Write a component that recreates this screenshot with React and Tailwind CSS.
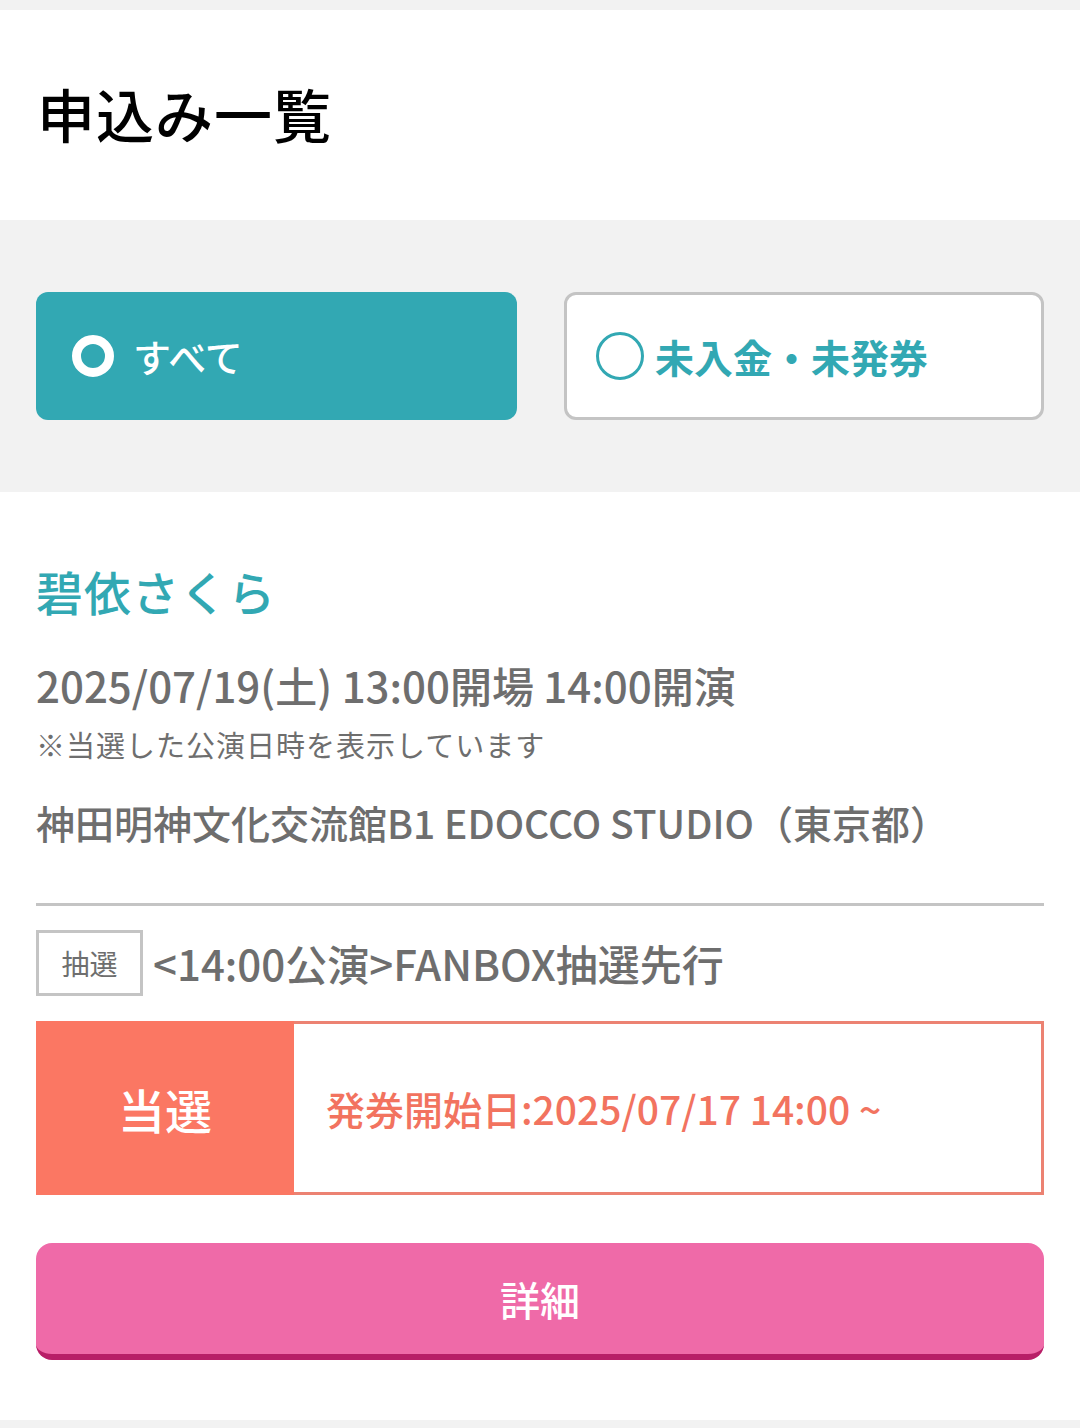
import React, { useState } from "react";

const font = { fontFamily: '"Noto Sans CJK JP", "Noto Sans", sans-serif' };

const App = () => {
  const [filter, setFilter] = useState("all");

  return (
    <div className="min-h-[1428px] bg-[#f2f2f2] pt-[10px]" style={font}>
      <div className="bg-white h-[210px] flex items-center px-[37px]">
        <h1 className="text-[58px] leading-none text-black font-medium tracking-[1px] pb-[4px]">
          申込み一覧
        </h1>
      </div>

      <div className="h-[272px] flex items-center gap-[47px] px-9">
        <button
          onClick={() => setFilter("all")}
          className={
            filter === "all"
              ? "w-[481px] h-[128px] rounded-[12px] bg-[#32a8b3] flex items-center px-[36px] gap-[19px]"
              : "w-[481px] h-[128px] rounded-[12px] bg-white border-[3px] border-[#c4c4c4] flex items-center px-[30px] gap-[12px]"
          }
        >
          <span className="w-[42px] h-[42px] rounded-full border-[9px] border-white" />
          <span className="text-[38px] leading-none text-white font-medium">すべて</span>
        </button>
        <button
          onClick={() => setFilter("unpaid")}
          className="flex-1 h-[128px] rounded-[12px] bg-white border-[3px] border-[#c4c4c4] flex items-center px-[29px] gap-[11px]"
        >
          <span className="w-[48px] h-[48px] rounded-full border-[3px] border-[#32a8b3]" />
          <span className="text-[39px] leading-none text-[#32a8b3] font-bold">未入金・未発券</span>
        </button>
      </div>

      <div className="bg-white h-[928px] px-9 pt-[75px]">
        <h2 className="text-[47px] leading-none text-[#32a8b3] font-medium tracking-[1px]">碧依さくら</h2>

        <p className="mt-[50px] text-[42px] leading-none text-[#6e6e6e] font-medium">
          2025/07/19(土) 13:00開場 14:00開演
        </p>
        <p className="mt-[24px] text-[29px] leading-none text-[#6e6e6e] tracking-[1px]">
          ※当選した公演日時を表示しています
        </p>
        <p className="mt-[44px] text-[39px] leading-none text-[#6e6e6e] font-medium">
          神田明神文化交流館B1 EDOCCO STUDIO（東京都）
        </p>

        <div className="mt-[61px] border-t-[3px] border-[#c4c4c4]" />

        <div className="mt-[24px] flex items-center gap-[10px]">
          <span className="w-[107px] h-[66px] border-[3px] border-[#c4c4c4] flex items-center justify-center text-[28px] text-[#6e6e6e]">
            抽選
          </span>
          <span className="text-[42px] leading-none text-[#6e6e6e] font-medium">
            &lt;14:00公演&gt;FANBOX抽選先行
          </span>
        </div>

        <div className="mt-[25px] h-[174px] flex border-[3px] border-[#ec8272]">
          <div className="w-[258px] bg-[#fb7763] flex items-center justify-center -m-[3px] mr-0">
            <span className="text-[47px] leading-none text-white font-medium">当選</span>
          </div>
          <div className="flex-1 flex items-center pl-[32px]">
            <span className="text-[39px] leading-none text-[#f2735f] font-medium">
              発券開始日:2025/07/17 14:00 ~
            </span>
          </div>
        </div>

        <button className="mt-[48px] w-full h-[117px] rounded-[16px] bg-[#ef6aa8] border-b-[6px] border-[#b81e67] flex items-center justify-center">
          <span className="text-[40px] leading-none text-white font-medium">詳細</span>
        </button>
      </div>
    </div>
  );
};

export default App;
